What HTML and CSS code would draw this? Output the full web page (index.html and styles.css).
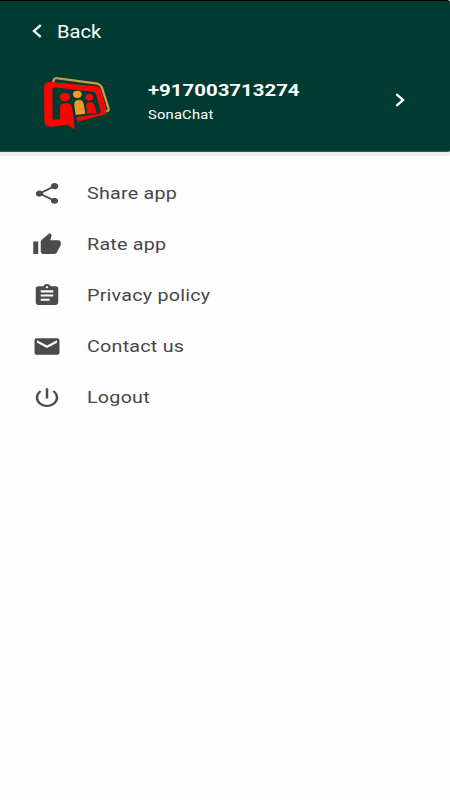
FILE: index.html
```html
<!DOCTYPE html>
<html lang="en">
<head>
    <meta charset="UTF-8">
    <meta name="viewport" content="width=device-width, initial-scale=1.0">
    <title>SonaChat</title>
    <link rel="stylesheet" href="styles.css">
</head>
<body>
    <header class="header">
        <div class="back">
            <svg class="chevron" viewBox="0 0 10 14" preserveAspectRatio="none"><path d="M8.7 1.2L2 7l6.7 5.8"/></svg>
            <span class="back-text">Back</span>
        </div>
        <div class="profile">
            <svg class="logo" viewBox="0 0 255 210">
                <path class="card-back" d="M54 43L57 34Q60 29 69 31L187 47Q196 49 200 57L220 119Q224 129 213 130"/>
                <path class="red" fill-rule="evenodd" d="M44 42L183 55Q194 56 198 65L214 125Q216 138 204 141L127 161L124 148L190 137Q198 136 197 129L183 79Q181 72 173 71L58 58L52 63L53 155L75 154L75 119Q76 106 91 105Q109 105 111 118L116 151L119 185L98 170L48 176Q29 176 28 160L27 60Q27 43 44 42Z"/>
                <ellipse class="red" cx="90" cy="87" rx="16" ry="13"/>
                <ellipse class="orange" cx="127" cy="79" rx="13" ry="11"/>
                <path class="orange" d="M118 111Q117 97 130 96Q144 95 146 108L151 137L122 141Z"/>
                <ellipse class="red" cx="163" cy="88" rx="12" ry="10"/>
                <path class="red" d="M154 114Q153 103 164 102Q175 101 178 111L185 135L157 138Z"/>
            </svg>
            <div class="info">
                <span class="phone">+917003713274</span>
                <span class="name">SonaChat</span>
            </div>
            <svg class="chevron" viewBox="0 0 10 14" preserveAspectRatio="none"><path d="M1.3 1.2L8 7l-6.7 5.8"/></svg>
        </div>
    </header>
    <main class="menu">
        <div class="item">
            <svg class="icon" viewBox="0 0 24 24" preserveAspectRatio="none"><path d="M18 16.08c-.76 0-1.44.3-1.96.77L8.91 12.7c.05-.23.09-.46.09-.7s-.04-.47-.09-.7l7.05-4.11c.54.5 1.25.81 2.04.81 1.66 0 3-1.34 3-3s-1.34-3-3-3-3 1.34-3 3c0 .24.04.47.09.7L8.04 9.81C7.5 9.31 6.79 9 6 9c-1.66 0-3 1.34-3 3s1.34 3 3 3c.79 0 1.5-.31 2.04-.81l7.12 4.16c-.05.21-.08.43-.08.65 0 1.61 1.31 2.92 2.92 2.92s2.92-1.31 2.92-2.92-1.31-2.92-2.92-2.92z"/></svg>
            <span class="label">Share app</span>
        </div>
        <div class="item">
            <svg class="icon" viewBox="0 0 24 24" preserveAspectRatio="none"><path d="M1 21h4V9H1v12zm22-11c0-1.1-.9-2-2-2h-6.31l.95-4.57.03-.32c0-.41-.17-.79-.44-1.06L14.17 1 7.59 7.59C7.22 7.95 7 8.45 7 9v10c0 1.1.9 2 2 2h9c.83 0 1.54-.5 1.84-1.22l3.02-7.05c.09-.23.14-.47.14-.73v-2z"/></svg>
            <span class="label">Rate app</span>
        </div>
        <div class="item">
            <svg class="icon" viewBox="0 0 24 24" preserveAspectRatio="none"><path d="M19 3h-4.18C14.4 1.84 13.3 1 12 1c-1.3 0-2.4.84-2.82 2H5c-1.1 0-2 .9-2 2v14c0 1.1.9 2 2 2h14c1.1 0 2-.9 2-2V5c0-1.1-.9-2-2-2zm-7 0c.55 0 1 .45 1 1s-.45 1-1 1-1-.45-1-1 .45-1 1-1zm2 14H7v-2h7v2zm3-4H7v-2h10v2zm0-4H7V7h10v2z"/></svg>
            <span class="label">Privacy policy</span>
        </div>
        <div class="item">
            <svg class="icon" viewBox="0 0 24 24" preserveAspectRatio="none"><path d="M20 4H4c-1.1 0-1.99.9-1.99 2L2 18c0 1.1.9 2 2 2h16c1.1 0 2-.9 2-2V6c0-1.1-.9-2-2-2zm0 4.4l-8 5-8-5V6l8 5 8-5v2.4z"/></svg>
            <span class="label">Contact us</span>
        </div>
        <div class="item">
            <svg class="icon" viewBox="0 0 24 24" preserveAspectRatio="none"><path d="M13 3h-2v10h2V3zm4.83 2.17l-1.42 1.42C17.99 7.86 19 9.81 19 12c0 3.87-3.13 7-7 7s-7-3.13-7-7c0-2.19 1.01-4.14 2.58-5.42L6.17 5.17C4.23 6.82 3 9.26 3 12c0 4.97 4.03 9 9 9s9-4.03 9-9c0-2.74-1.23-5.18-3.17-6.83z"/></svg>
            <span class="label">Logout</span>
        </div>
    </main>
</body>
</html>
```
FILE: styles.css
```css
body {
    font-family: Roboto, "Liberation Sans", sans-serif;
    margin: 0;
    padding: 0;
    height: 800px;
    background-color: #fefefe;
    overflow: hidden;
}
.header {
    height: 152px;
    box-sizing: border-box;
    border-top: 1px solid #000;
    border-bottom: 1px solid #35594f;
    border-radius: 0 3px 2px 0;
    background-color: #003b31;
    box-shadow: 0 4px 0 #eceeed;
    color: #fff;
}
.back {
    display: flex;
    align-items: center;
    height: 60px;
    padding-left: 32px;
}
.back-text {
    margin-left: 15px;
    font-size: 18px;
    transform: scaleX(1.12);
    transform-origin: left;
}
.chevron {
    width: 10px;
    height: 14px;
    fill: none;
    stroke: #fff;
    stroke-width: 2.3;
}
.profile {
    display: flex;
    align-items: center;
    height: 77px;
    padding: 0 45px 0 35px;
}
.logo {
    width: 85px;
    height: 70px;
    margin-top: 6px;
}
.card-back {
    fill: none;
    stroke: #c99a45;
    stroke-width: 7;
}
.red {
    fill: #fb0500;
}
.orange {
    fill: #f39a27;
}
.info {
    display: flex;
    flex: 1;
    flex-direction: column;
    margin-left: 28px;
    padding-top: 3px;
}
.phone {
    font-size: 17px;
    font-weight: bold;
    line-height: 26px;
    transform: scaleX(1.2);
    transform-origin: left;
}
.name {
    font-size: 13px;
    line-height: 23px;
    letter-spacing: 0.2px;
    transform: scaleX(1.13);
    transform-origin: left;
}
.menu {
    padding: 16px 0 0 32px;
}
.item {
    display: flex;
    align-items: center;
    height: 50.8px;
}
.icon {
    width: 30px;
    height: 25px;
    margin-top: 1px;
    fill: #4b4b4b;
}
.label {
    margin-left: 25px;
    font-size: 17px;
    letter-spacing: 0.2px;
    color: #474747;
    transform: scaleX(1.16);
    transform-origin: left;
}
```
